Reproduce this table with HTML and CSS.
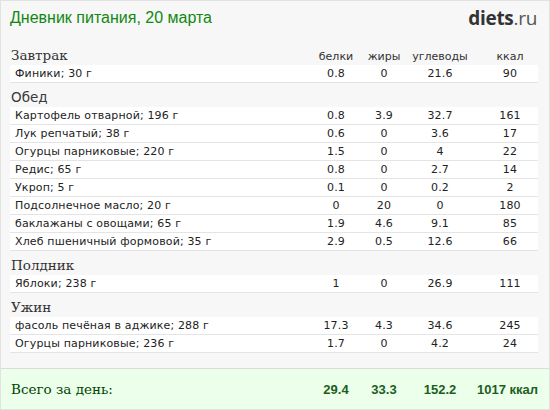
FILE: index.html
```html
<!DOCTYPE html>
<html lang="ru">
<head>
<meta charset="utf-8">
<title>Дневник питания</title>
<link rel="stylesheet" href="styles.css">
</head>
<body>
<div class="card">
  <header class="top">
    <h1 class="title">Дневник питания, 20 марта</h1>
    <div class="logo"><b>diets</b>.ru</div>
  </header>

  <div class="meal">
    <div class="meal-head">
      <span class="meal-name serif">Завтрак</span>
      <span class="col">белки</span><span class="col">жиры</span><span class="col">углеводы</span><span class="col c4">ккал</span>
    </div>
    <div class="row"><span class="name">Финики; 30 г</span><span class="col">0.8</span><span class="col">0</span><span class="col">21.6</span><span class="col c4">90</span></div>
  </div>

  <div class="meal">
    <div class="meal-head"><span class="meal-name sans">Обед</span></div>
    <div class="row"><span class="name">Картофель отварной; 196 г</span><span class="col">0.8</span><span class="col">3.9</span><span class="col">32.7</span><span class="col c4">161</span></div>
    <div class="row"><span class="name">Лук репчатый; 38 г</span><span class="col">0.6</span><span class="col">0</span><span class="col">3.6</span><span class="col c4">17</span></div>
    <div class="row"><span class="name">Огурцы парниковые; 220 г</span><span class="col">1.5</span><span class="col">0</span><span class="col">4</span><span class="col c4">22</span></div>
    <div class="row"><span class="name">Редис; 65 г</span><span class="col">0.8</span><span class="col">0</span><span class="col">2.7</span><span class="col c4">14</span></div>
    <div class="row"><span class="name">Укроп; 5 г</span><span class="col">0.1</span><span class="col">0</span><span class="col">0.2</span><span class="col c4">2</span></div>
    <div class="row"><span class="name">Подсолнечное масло; 20 г</span><span class="col">0</span><span class="col">20</span><span class="col">0</span><span class="col c4">180</span></div>
    <div class="row"><span class="name">баклажаны с овощами; 65 г</span><span class="col">1.9</span><span class="col">4.6</span><span class="col">9.1</span><span class="col c4">85</span></div>
    <div class="row"><span class="name">Хлеб пшеничный формовой; 35 г</span><span class="col">2.9</span><span class="col">0.5</span><span class="col">12.6</span><span class="col c4">66</span></div>
  </div>

  <div class="meal">
    <div class="meal-head"><span class="meal-name serif">Полдник</span></div>
    <div class="row"><span class="name">Яблоки; 238 г</span><span class="col">1</span><span class="col">0</span><span class="col">26.9</span><span class="col c4">111</span></div>
  </div>

  <div class="meal">
    <div class="meal-head"><span class="meal-name serif">Ужин</span></div>
    <div class="row"><span class="name">фасоль печёная в аджике; 288 г</span><span class="col">17.3</span><span class="col">4.3</span><span class="col">34.6</span><span class="col c4">245</span></div>
    <div class="row"><span class="name">Огурцы парниковые; 236 г</span><span class="col">1.7</span><span class="col">0</span><span class="col">4.2</span><span class="col c4">24</span></div>
  </div>

  <footer class="total">
    <span class="total-label">Всего за день:</span>
    <span class="col">29.4</span><span class="col">33.3</span><span class="col">152.2</span><span class="col c4 kcal">1017 ккал</span>
  </footer>
</div>
</body>
</html>
```

FILE: styles.css
```css
* { box-sizing: border-box; }
html, body { margin: 0; padding: 0; }
body {
  width: 550px;
  height: 410px;
  background: #f7f7f7;
  font-family: "DejaVu Sans", Verdana, sans-serif;
  overflow: hidden;
}
.card {
  width: 550px;
  height: 410px;
  border: 1px solid #e2e2e2;
  background: #f7f7f7;
  display: flex;
  flex-direction: column;
}
.top {
  display: flex;
  justify-content: space-between;
  align-items: flex-start;
  padding: 6px 12px 0 9px;
  height: 40px;
}
.title {
  margin: 0;
  font-weight: normal;
  font-size: 16px;
  line-height: 22px;
  color: #118811;
  font-family: "Liberation Sans", Arial, sans-serif;
}
.logo {
  font-family: "Open Sans", sans-serif;
  font-size: 19px;
  color: #555;
  line-height: 22px;
  letter-spacing: -0.3px;
}
.logo b { color: #333; font-weight: 700; }

.meal { padding: 0 11px 0 9px; }
.meal-head {
  display: grid;
  grid-template-columns: 1fr 50px 46px 66px 65px;
  align-items: end;
  height: 24px;
  padding-bottom: 2px;
}
.meal-head .col {
  font-size: 11px;
  color: #333;
  text-align: center;
}
.meal-name {
  color: #333;
  padding-left: 1px;
}
.serif { font-family: "DejaVu Serif", Georgia, serif; font-size: 13.5px; }
.sans { font-family: "DejaVu Sans", Verdana, sans-serif; font-size: 13.5px; color: #3a3a3a; }

.row {
  display: grid;
  grid-template-columns: 1fr 50px 46px 66px 65px;
  align-items: center;
  height: 18px;
  background: #fff;
  border-bottom: 1px solid #e4e4e4;
  font-size: 11px;
  color: #222;
  letter-spacing: 0.15px;
}
.name { padding-left: 5px; white-space: nowrap; }
.col { text-align: center; white-space: nowrap; }
.c4 { padding-left: 9px; }

.total {
  margin-top: auto;
  height: 41px;
  background: #ebffeb;
  border-top: 1px solid #dcdcdc;
  display: grid;
  grid-template-columns: 1fr 50px 46px 66px 65px;
  align-items: center;
  padding: 0 11px 0 10px;
}
.total-label {
  font-family: "DejaVu Serif", Georgia, serif;
  font-size: 13.5px;
  color: #004400;
}
.total .col {
  font-family: "Liberation Sans", Arial, sans-serif;
  font-weight: bold;
  font-size: 13px;
  color: #1d5e1d;
}
.total .kcal { text-align: right; padding-left: 0; }
```
